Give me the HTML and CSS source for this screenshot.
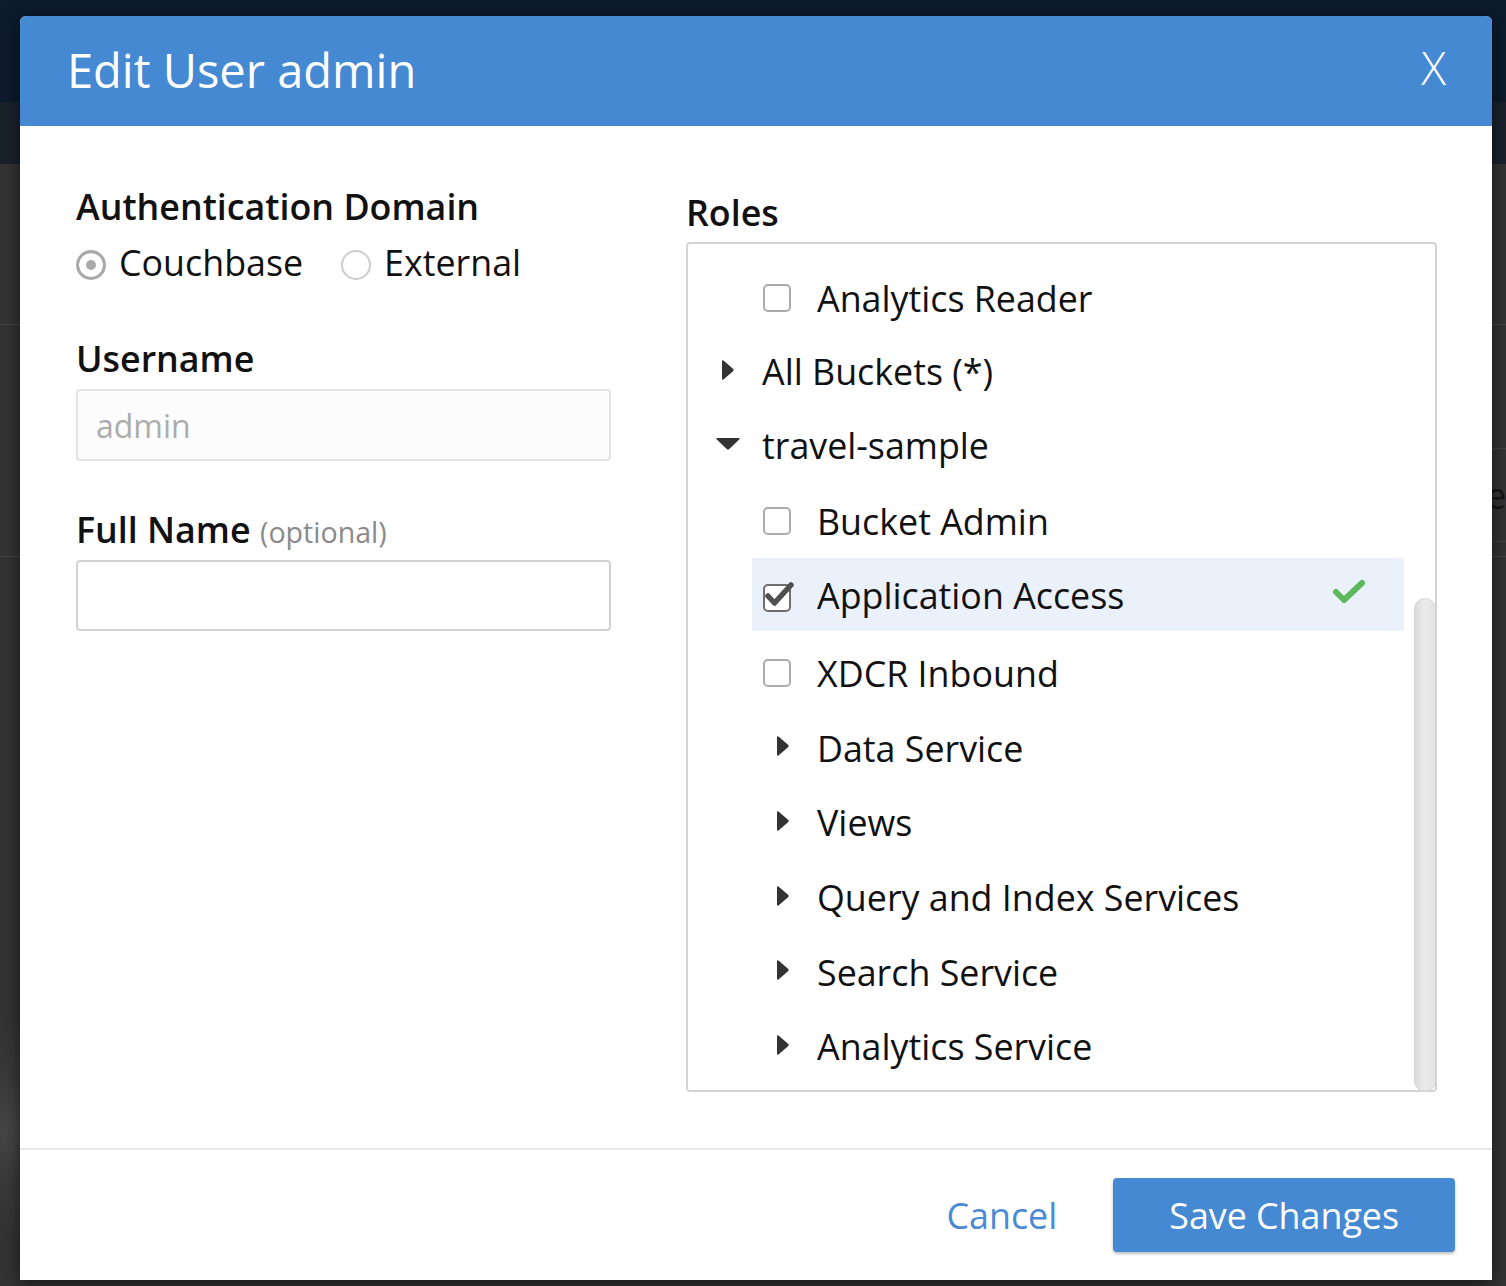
FILE: index.html
```html
<!DOCTYPE html>
<html lang="en">
<head>
<meta charset="utf-8">
<title>Edit User admin</title>
<link rel="stylesheet" href="styles.css">
</head>
<body>
<div class="page">
  <div class="topbar"></div>
  <div class="subbar"></div>
  <div class="content">
    <div class="bg-row bg-row-a"></div>
    <div class="bg-row bg-row-b">
      <div class="bg-cell"><span class="bg-text">Reset</span></div>
    </div>
  </div>
</div>

<div class="modal">
  <header class="modal-header">
    <h1 class="modal-title">Edit User admin</h1>
    <button class="close" type="button">X</button>
  </header>

  <div class="modal-body">
    <div class="col-left">
      <div class="label">Authentication Domain</div>
      <div class="radios">
        <label class="radio"><span class="radio-dot checked"></span>Couchbase</label>
        <label class="radio"><span class="radio-dot"></span>External</label>
      </div>
      <div class="label label-user">Username</div>
      <input class="field field-disabled" value="admin" readonly>
      <div class="label label-full">Full Name <span class="optional">(optional)</span></div>
      <input class="field field-full">
    </div>

    <div class="col-right">
      <div class="label label-roles">Roles</div>
      <div class="roles-box">
        <div class="tree">
          <div class="row lvl1 item r-first"><span class="cb"></span><span class="txt">Analytics Reader</span></div>
          <div class="row lvl0 group r-buckets">
            <span class="caret"><svg width="12" height="20" viewBox="0 0 12 20"><path d="M1.5 0.6 L11.3 9 Q12 10 11.3 11 L1.5 19.4 Q0 20.2 0 18.6 V1.4 Q0 -0.2 1.5 0.6 Z" fill="#333"/></svg></span>
            <span class="txt">All Buckets (*)</span>
          </div>
          <div class="row lvl0 group r-travel">
            <span class="caret"><svg width="24" height="12" viewBox="0 0 24 12"><path d="M1.4 0 H22.6 Q24.2 0 23.2 1.4 L13 11.3 Q12 12.2 11 11.3 L0.8 1.4 Q-0.2 0 1.4 0 Z" fill="#333"/></svg></span>
            <span class="txt">travel-sample</span>
          </div>
          <div class="row lvl1 item r-ba"><span class="cb"></span><span class="txt">Bucket Admin</span></div>
          <div class="row lvl1 item selected">
            <span class="cb checked"><svg class="cb-mark" width="40" height="36" viewBox="0 0 40 36"><path d="M9 16 L15.5 23 L32 5" fill="none" stroke="#505050" stroke-width="5.5" stroke-linecap="round" stroke-linejoin="round"/></svg></span>
            <span class="txt">Application Access</span>
            <svg class="ok" width="34" height="26" viewBox="0 0 34 26"><path d="M4 13 L12 21 L30 4" fill="none" stroke="#5cb85c" stroke-width="6" stroke-linecap="round" stroke-linejoin="round"/></svg>
          </div>
          <div class="row lvl1 item after-selected"><span class="cb"></span><span class="txt">XDCR Inbound</span></div>
          <div class="row lvl1 group">
            <span class="caret"><svg width="12" height="20" viewBox="0 0 12 20"><path d="M1.5 0.6 L11.3 9 Q12 10 11.3 11 L1.5 19.4 Q0 20.2 0 18.6 V1.4 Q0 -0.2 1.5 0.6 Z" fill="#333"/></svg></span>
            <span class="txt">Data Service</span>
          </div>
          <div class="row lvl1 group">
            <span class="caret"><svg width="12" height="20" viewBox="0 0 12 20"><path d="M1.5 0.6 L11.3 9 Q12 10 11.3 11 L1.5 19.4 Q0 20.2 0 18.6 V1.4 Q0 -0.2 1.5 0.6 Z" fill="#333"/></svg></span>
            <span class="txt">Views</span>
          </div>
          <div class="row lvl1 group">
            <span class="caret"><svg width="12" height="20" viewBox="0 0 12 20"><path d="M1.5 0.6 L11.3 9 Q12 10 11.3 11 L1.5 19.4 Q0 20.2 0 18.6 V1.4 Q0 -0.2 1.5 0.6 Z" fill="#333"/></svg></span>
            <span class="txt">Query and Index Services</span>
          </div>
          <div class="row lvl1 group">
            <span class="caret"><svg width="12" height="20" viewBox="0 0 12 20"><path d="M1.5 0.6 L11.3 9 Q12 10 11.3 11 L1.5 19.4 Q0 20.2 0 18.6 V1.4 Q0 -0.2 1.5 0.6 Z" fill="#333"/></svg></span>
            <span class="txt">Search Service</span>
          </div>
          <div class="row lvl1 group">
            <span class="caret"><svg width="12" height="20" viewBox="0 0 12 20"><path d="M1.5 0.6 L11.3 9 Q12 10 11.3 11 L1.5 19.4 Q0 20.2 0 18.6 V1.4 Q0 -0.2 1.5 0.6 Z" fill="#333"/></svg></span>
            <span class="txt">Analytics Service</span>
          </div>
        </div>
        <div class="scroll-thumb"></div>
      </div>
    </div>
  </div>

  <footer class="modal-footer">
    <a class="cancel">Cancel</a>
    <button class="btn-primary" type="button">Save Changes</button>
  </footer>
</div>
</body>
</html>
```

FILE: styles.css
```css
* { box-sizing: border-box; }

html, body {
  margin: 0;
  padding: 0;
}

body {
  width: 1506px;
  height: 1286px;
  overflow: hidden;
  position: relative;
  background: #333333;
  font-family: "Open Sans", "Noto Sans", sans-serif;
}

/* ---------- page behind the dialog ---------- */
.page {
  height: 1286px;
  background: radial-gradient(circle at 12px 1130px, #474747 0, #3a3a3a 50px, #333333 110px);
}
.topbar { height: 102px; background: #0d1b2c; }
.subbar { height: 62px; background: #19212b; }
.bg-row-a { height: 161px; border-bottom: 1px solid #434343; }
.bg-row-b {
  height: 232px;
  border-bottom: 1px solid #434343;
  display: flex;
  justify-content: flex-end;
}
.bg-cell {
  width: 220px;
  margin-top: 123px;
  height: 94px;
  border-top: 1px solid #434343;
  border-bottom: 1px solid #434343;
  display: flex;
  align-items: center;
  justify-content: flex-end;
  margin-right: -13px;
}
.bg-text { font-size: 35.8px; color: #151515; }

/* ---------- dialog ---------- */
.modal {
  position: absolute;
  left: 20px;
  top: 16px;
  width: 1472px;
  height: 1264px;
  background: #ffffff;
  border-radius: 6px 6px 0 0;
  box-shadow: 0 4px 18px rgba(0, 0, 0, 0.55);
  display: flex;
  flex-direction: column;
  overflow: hidden;
}

.modal-header {
  height: 110px;
  flex: none;
  background: #4589d3;
  color: #ffffff;
  display: flex;
  align-items: center;
  justify-content: space-between;
  padding: 0 46px 2px 47px;
}
.modal-title {
  margin: 0;
  font-size: 47px;
  font-weight: 400;
  line-height: 56px;
}
.close {
  background: none;
  border: none;
  padding: 0;
  color: #ffffff;
  font-family: inherit;
  font-size: 46px;
  font-weight: 300;
  line-height: 56px;
  margin-bottom: 6px;
}

.modal-body {
  flex: 1;
  display: grid;
  grid-template-columns: 535px 751px;
  column-gap: 75px;
  align-items: start;
  padding: 58px 55px 0 56px;
}

.label {
  font-size: 35.8px;
  font-weight: 600;
  line-height: 44px;
  color: #111111;
}

.radios {
  display: flex;
  margin-top: 12px;
  height: 44px;
}
.radio {
  display: flex;
  align-items: center;
  font-size: 35.8px;
  line-height: 44px;
  color: #111111;
  margin-right: 38px;
}
.radio-dot {
  width: 30px;
  height: 30px;
  border-radius: 50%;
  border: 2px solid #cccccc;
  margin-right: 13px;
  margin-top: 6px;
  background: #ffffff;
}
.radio-dot.checked {
  border: 3px solid #aaaaaa;
  background: #aaaaaa;
  box-shadow: inset 0 0 0 7px #ffffff;
}

.label-user { margin-top: 52px; }
.label-full { margin-top: 46px; height: 44px; }

.optional {
  font-size: 28.6px;
  font-weight: 400;
  line-height: 20px;
  color: #8a8a8a;
}

.field {
  display: block;
  width: 100%;
  height: 72px;
  margin-top: 9px;
  border: 2px solid #d9d9d9;
  border-radius: 4px;
  padding: 0 18px;
  font-family: inherit;
  font-size: 32px;
  color: #111111;
  background: #ffffff;
  outline: none;
}
.field-disabled {
  background: #fcfcfc;
  border-color: #e3e3e3;
  color: #acacac;
}
.field-full { height: 71px; margin-top: 9px; border-color: #d2d2d2; }

/* ---------- roles tree ---------- */
.label-roles { margin-top: 6px; }

.roles-box {
  position: relative;
  margin-top: 8px;
  height: 850px;
  border: 2px solid #d4d4d4;
  border-radius: 4px;
  overflow: hidden;
}

.tree { padding: 16px 31px 0 0; }

.row {
  display: flex;
  align-items: center;
  height: 74.6px;
  font-size: 35.8px;
  line-height: 44px;
  color: #111111;
  white-space: nowrap;
}
.lvl0 { padding-left: 28px; }
.lvl1 { margin-left: 64px; }
.lvl1.item { padding-left: 11px; }
.lvl1.group { padding-left: 19px; }

.r-first { height: 75px; }
.r-buckets { height: 72px; }
.r-travel { height: 76px; }
.r-ba { height: 75px; }
.selected { height: 73px; background: #eaf1fa; }
.after-selected { margin-top: 5px; }

.caret {
  width: 24px;
  margin-right: 22px;
  display: flex;
  justify-content: center;
  align-items: center;
  margin-top: -3px;
}
.caret svg { display: block; }

.cb {
  position: relative;
  flex: none;
  width: 28px;
  height: 28px;
  border: 2px solid #ababab;
  border-radius: 5px;
  margin-right: 26px;
  background: #ffffff;
}
.cb.checked {
  border-color: #6e6e6e;
  margin-top: 6px;
}
.cb-mark {
  position: absolute;
  left: -6px;
  top: -6px;
}

.ok {
  margin-left: auto;
  margin-right: 38px;
  margin-top: -6px;
}

.scroll-thumb {
  position: absolute;
  right: -1px;
  top: 354px;
  width: 22px;
  height: 494px;
  border-radius: 11px;
  border: 1px solid #d6d6d6;
  background: linear-gradient(to right, #dadada, #ebebeb 45%, #e4e4e4);
}

/* ---------- footer ---------- */
.modal-footer {
  flex: none;
  height: 132px;
  border-top: 2px solid #e9e9e9;
  display: flex;
  align-items: center;
  justify-content: flex-end;
  padding-right: 37px;
}
.cancel {
  font-size: 35.8px;
  color: #4a8ad4;
  margin-right: 56px;
  line-height: 44px;
}
.btn-primary {
  height: 74px;
  padding: 0 56px;
  background: #4589d3;
  color: #ffffff;
  border: none;
  border-radius: 4px;
  font-family: inherit;
  font-size: 35.8px;
  line-height: 44px;
  box-shadow: 0 2px 3px rgba(0, 0, 0, 0.25);
}
```
